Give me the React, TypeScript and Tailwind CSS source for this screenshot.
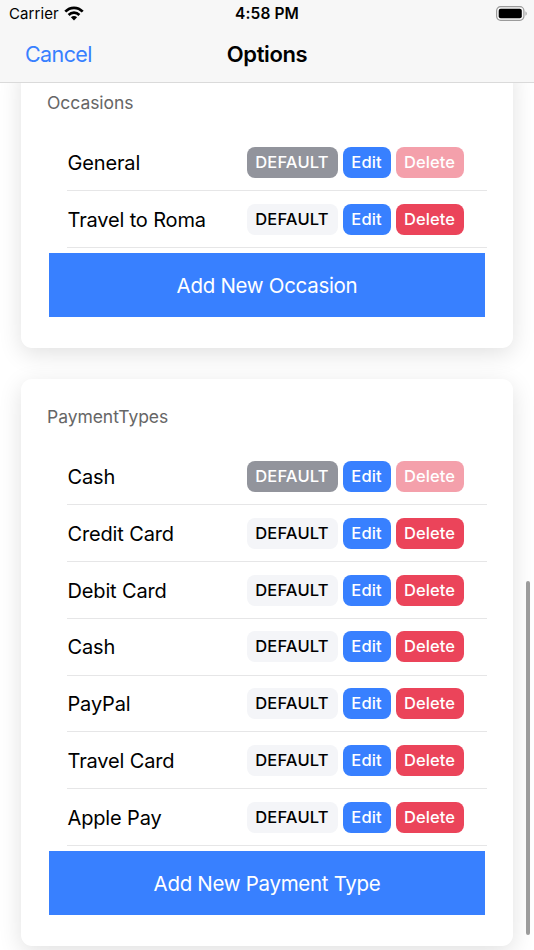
import { clsx } from "clsx";

type Item = {
  name: string;
  isDefault?: boolean;
};

const OCCASIONS: Item[] = [
  { name: "General", isDefault: true },
  { name: "Travel to Roma" },
];

const PAYMENT_TYPES: Item[] = [
  { name: "Cash", isDefault: true },
  { name: "Credit Card" },
  { name: "Debit Card" },
  { name: "Cash" },
  { name: "PayPal" },
  { name: "Travel Card" },
  { name: "Apple Pay" },
];

const SMALL_BUTTON =
  "flex h-[31px] items-center justify-center rounded-[8px] text-[16.5px] font-medium whitespace-nowrap";

function WifiIcon() {
  return (
    <svg width="20" height="15" viewBox="0 0 20 15" className="-mt-[2px] shrink-0">
      <g fill="none" stroke="#000" strokeWidth="2.7">
        <path d="M1.3 5.6C6.2 .5 13.8 .5 18.7 5.6" />
        <path d="M4.6 9C7.7 5.9 12.3 5.9 15.4 9" />
      </g>
      <path d="M10 14.4 6.9 11.3C8.6 9.6 11.4 9.6 13.1 11.3Z" />
    </svg>
  );
}

function BatteryIcon() {
  return (
    <svg width="32" height="15" viewBox="0 0 32 15" className="-mt-[2px] shrink-0">
      <rect x=".6" y=".7" width="27.3" height="13.6" rx="4" fill="none" stroke="#9b9b9b" strokeWidth="1.2" />
      <rect x="2.7" y="2.8" width="23.1" height="9.4" rx="2" />
      <path d="M29.5 5.2C31.1 5.9 31.1 9.1 29.5 9.8Z" fill="#9b9b9b" />
    </svg>
  );
}

function StatusBar() {
  return (
    <div className="grid h-7 grid-cols-[1fr_auto_1fr] items-center pl-[9px] pr-[9px]">
      <div className="flex items-center gap-[5px] text-[15px] tracking-[0.1px]">
        Carrier
        <WifiIcon />
      </div>
      <span className="text-center text-[15.5px] font-semibold tracking-[0.1px]">4:58 PM</span>
      <div className="-mr-[3px] flex justify-end">
        <BatteryIcon />
      </div>
    </div>
  );
}

function Row({ item }: { item: Item }) {
  return (
    <li className="flex h-[56.75px] items-center border-b border-[#e6e6e7]">
      <span className="w-[179.5px] pl-[0.5px] pt-px text-[20px] tracking-[-0.15px]">{item.name}</span>
      <div className="flex gap-[5px]">
        <button
          className={clsx(
            SMALL_BUTTON,
            "w-[91px] tracking-[0.2px]",
            item.isDefault ? "bg-[#92949c] text-white" : "bg-[#f4f5f8] text-black"
          )}
        >
          DEFAULT
        </button>
        <button className={clsx(SMALL_BUTTON, "w-[48px] bg-[#3880ff] tracking-[0.1px] text-white")}>
          Edit
        </button>
        <button
          disabled={item.isDefault}
          className={clsx(
            SMALL_BUTTON,
            "w-[68px] bg-[#eb445a] tracking-[0.1px] text-white",
            item.isDefault && "opacity-50"
          )}
        >
          Delete
        </button>
      </div>
    </li>
  );
}

type CardProps = {
  title: string;
  items: Item[];
  addLabel: string;
};

function OptionsCard({ title, items, addLabel }: CardProps) {
  return (
    <section className="mx-[21px] rounded-[11px] bg-white pb-[31px] shadow-[0_6px_23px_rgba(0,0,0,0.12)]">
      <h2 className="h-[70px] pl-[26px] pt-[25.4px] text-[17.5px] leading-[26px] tracking-[-0.05px] text-[#666]">
        {title}
      </h2>
      <ul className="ml-[46px] mr-[26px]">
        {items.map((item, i) => (
          <Row key={i} item={item} />
        ))}
      </ul>
      <button className="mx-[28px] mt-[5px] flex h-[64px] w-[436px] items-center justify-center bg-[#3880ff] pt-[3px] text-[20.5px] tracking-[-0.3px] text-white">
        {addLabel}
      </button>
    </section>
  );
}

export default function App() {
  return (
    <div className="relative flex h-[950px] w-[534px] flex-col overflow-hidden bg-white font-['Inter',sans-serif] text-black">
      <header className="h-[83px] shrink-0 border-b border-[#dadada] bg-[#f7f7f7]">
        <StatusBar />
        <div className="grid h-[53px] grid-cols-3 items-center px-[25px]">
          <button className="text-left text-[21.5px] tracking-[-0.6px] text-[#3880ff]">Cancel</button>
          <h1 className="text-center text-[22px] font-semibold tracking-[-0.4px]">Options</h1>
        </div>
      </header>

      <main className="min-h-0 flex-1 overflow-hidden">
        <div className="-mt-[18.6px] flex flex-col gap-[30.8px]">
          <OptionsCard title="Occasions" items={OCCASIONS} addLabel="Add New Occasion" />
          <OptionsCard title="PaymentTypes" items={PAYMENT_TYPES} addLabel="Add New Payment Type" />
        </div>
      </main>

      {/* Scroll indicator */}
      <div className="absolute right-[4px] top-[581px] h-[354px] w-[4px] rounded-full bg-[#9c9c9c]" />
    </div>
  );
}
